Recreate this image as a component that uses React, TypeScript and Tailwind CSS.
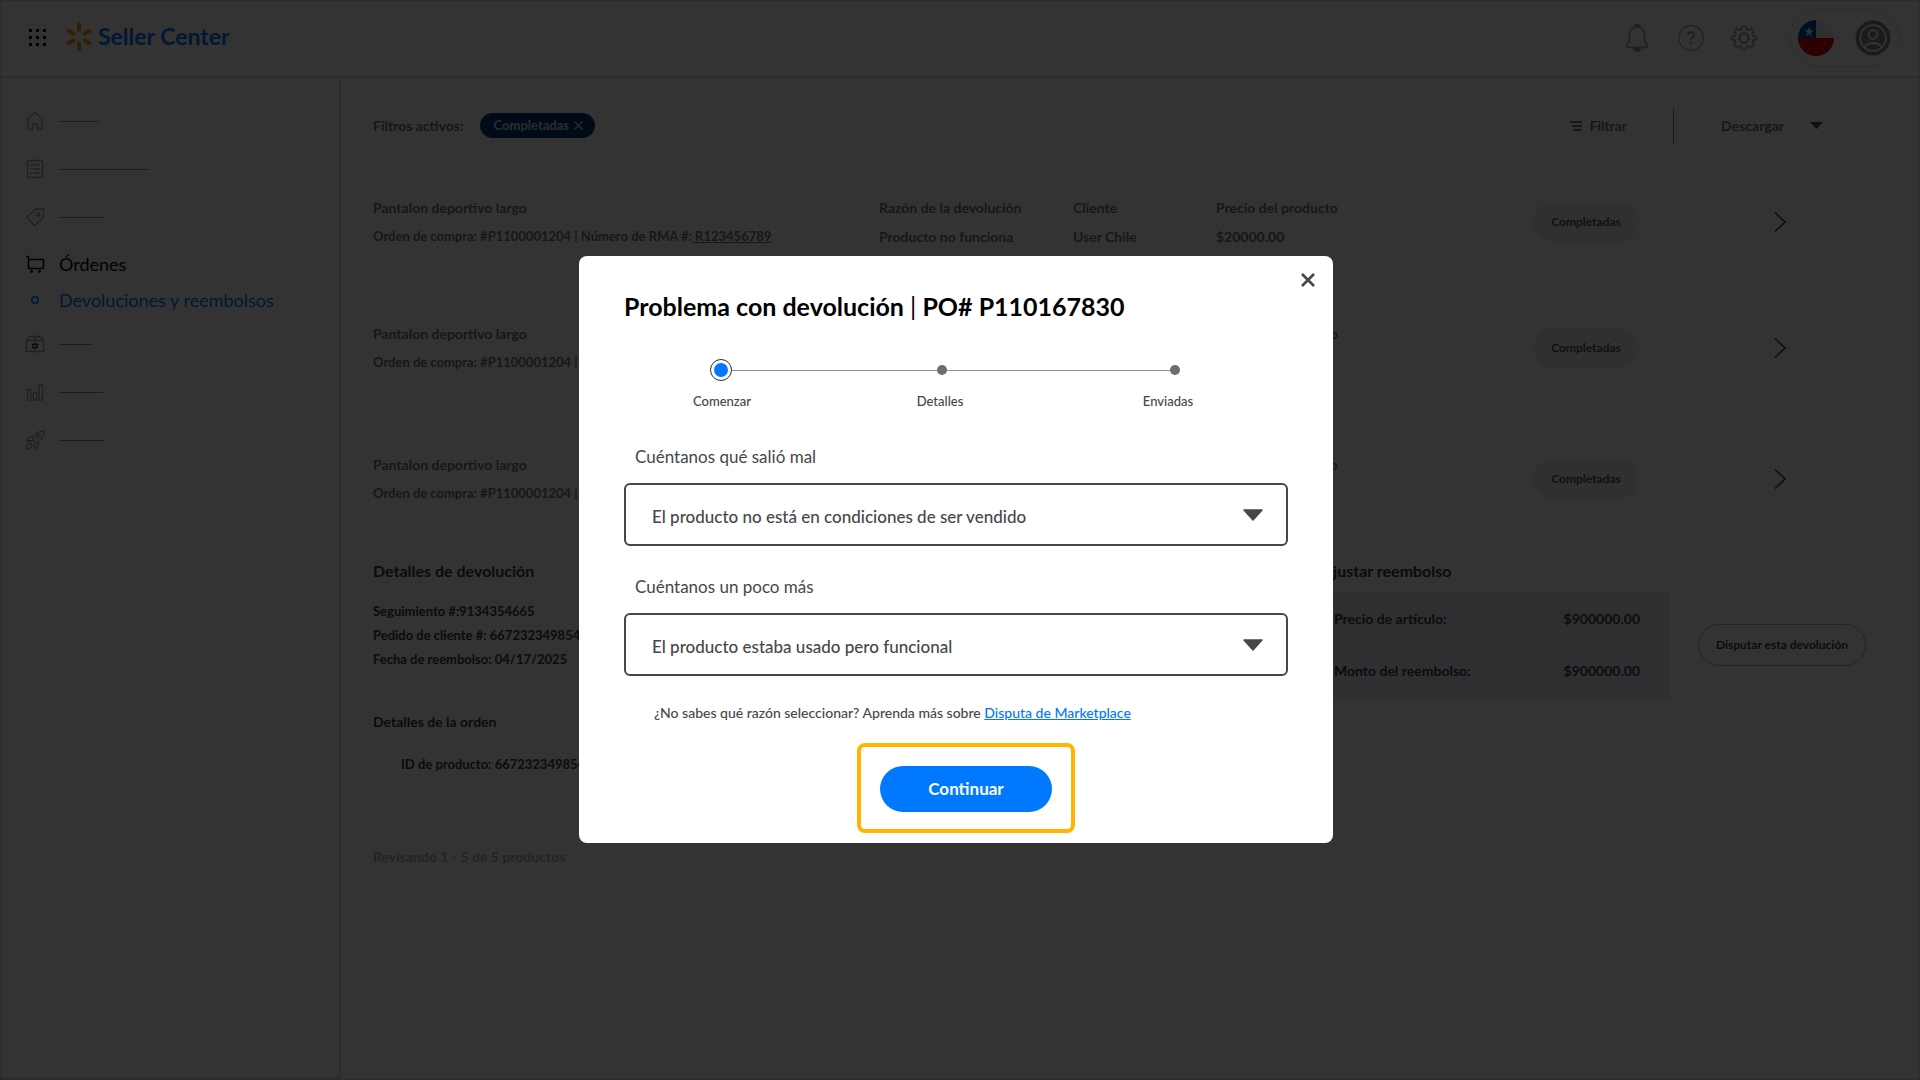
import { Fragment, type ReactNode } from "react";

const orders = [
    { id: 1, open: false, spacing: "pt-[25px] pb-[31px]" },
    { id: 2, open: false, spacing: "py-9" },
    { id: 3, open: true, spacing: "py-9" },
];

const steps = ["Comenzar", "Detalles", "Enviadas"];

const Icon = ({
    children,
    className = "size-5",
}: {
    children: ReactNode;
    className?: string;
}) => (
    <svg
        viewBox="0 0 20 20"
        fill="none"
        stroke="currentColor"
        strokeWidth="1.3"
        strokeLinejoin="round"
        aria-hidden="true"
        className={className}
    >
        {children}
    </svg>
);

const Spark = () => (
    <svg
        viewBox="0 0 26 30"
        stroke="#ffa200"
        strokeWidth="4"
        strokeLinecap="round"
        aria-hidden="true"
        className="h-[30px] w-[26px]"
    >
        <path d="M13 2.6v6M13 21.4v6M2.6 9l4.8 2.6M18.6 11.6l4.8-2.6M2.6 21l4.8-2.6M18.6 18.4l4.8 2.6" />
    </svg>
);

const Header = () => (
    <header className="flex h-[77px] items-center justify-between border-b-2 border-[#dcdcdc] pr-[19px] pb-[2px] pl-7">
        <div className="flex items-center pb-px">
            <button type="button" aria-label="Aplicaciones">
                <svg viewBox="0 0 17 17" className="size-[17px]">
                    <path d="M0 0h3v3H0zM7 0h3v3H7zM14 0h3v3h-3zM0 7h3v3H0zM7 7h3v3H7zM14 7h3v3h-3zM0 14h3v3H0zM7 14h3v3H7zM14 14h3v3h-3z" />
                </svg>
            </button>
            <a href="#" className="ml-5 flex items-center gap-[6px]">
                <Spark />
                <span className="pb-[2px] text-[23px] leading-7 font-bold text-[#0079ff]">
                    Seller Center
                </span>
            </a>
        </div>
        <div className="flex items-center text-[#a0a0a0]">
            <button type="button" aria-label="Notificaciones">
                <svg
                    viewBox="0 0 24 28"
                    fill="none"
                    stroke="currentColor"
                    strokeWidth="1.8"
                    strokeLinejoin="round"
                    className="h-7 w-6"
                >
                    <path d="M12 3.2c-5 0-7.6 3.6-7.6 8v5.4c0 2.2-2.9 3.4-2.9 5.2 0 .9.5 1.5 1.4 1.5h18.2c.9 0 1.4-.6 1.4-1.5 0-1.8-2.9-3-2.9-5.2v-5.4c0-4.4-2.6-8-7.6-8z" />
                    <path
                        d="M9.5 3.2a2.5 2.5 0 0 1 5 0zM9 24h6a3 3 0 0 1-6 0z"
                        fill="currentColor"
                    />
                </svg>
            </button>
            <button type="button" aria-label="Ayuda" className="ml-[29px]">
                <svg
                    viewBox="0 0 26 26"
                    fill="none"
                    stroke="currentColor"
                    className="size-[26px]"
                >
                    <circle cx="13" cy="13" r="12.3" strokeWidth="1.2" />
                    <path
                        d="M10.2 10a2.9 2.9 0 1 1 4.3 2.5c-1 .6-1.5 1.2-1.5 2.7"
                        strokeWidth="2"
                    />
                    <circle cx="13" cy="18" r="1.3" fill="currentColor" stroke="none" />
                </svg>
            </button>
            <button type="button" aria-label="Configuración" className="ml-[27px]">
                <svg
                    viewBox="0 0 26 26"
                    fill="none"
                    stroke="currentColor"
                    strokeWidth="1.6"
                    strokeLinejoin="round"
                    className="size-[26px]"
                >
                    <path d="M10.9 1.3h4.2l.5 3 2.1.9 2.5-1.8 2.9 2.9-1.8 2.5.9 2.1 3 .5v3.200l-3 .5-.9 2.1 1.8 2.5-2.9 2.9-2.5-1.8-2.1.9-.5 3h-4.2l-.5-3-2.1-.9-2.5 1.8-2.9-2.9 1.8-2.5-.9-2.1-3-.5v-3.200l3-.5.9-2.1-1.8-2.5 2.9-2.9 2.500 1.8 2.1-.9z" />
                    <circle cx="13" cy="13" r="4.6" strokeWidth="2.2" />
                </svg>
            </button>
            <div className="ml-8 flex h-[58px] items-center gap-[10px] rounded-full border border-[#e0e0e0] px-2">
                <svg viewBox="0 0 36 36" role="img" aria-label="Chile" className="size-9">
                    <clipPath id="flag">
                        <circle cx="18" cy="18" r="18" />
                    </clipPath>
                    <g clipPath="url(#flag)">
                        <path d="M0 0h36v18H0z" fill="#f0f0f0" />
                        <path d="M0 0h18v18H0z" fill="#0052b4" />
                        <path d="M0 18h36v18H0z" fill="#e60000" />
                        <path
                            d="m11 6.5 1.2 3.7h3.9l-3.2 2.3 1.2 3.7-3.1-2.3-3.1 2.3 1.2-3.7-3.2-2.3h3.9z"
                            fill="#f0f0f0"
                        />
                    </g>
                </svg>
                <span className="h-9 w-px bg-[#f4f4f4]" />
                <button type="button" aria-label="Cuenta">
                    <svg viewBox="0 0 36 36" className="size-9">
                        <circle cx="18" cy="18" r="17.5" fill="#868686" />
                        <g fill="none" stroke="#fff" strokeWidth="1.8">
                            <circle cx="18" cy="18" r="12.8" />
                            <circle cx="18" cy="14.5" r="4.3" />
                            <path d="M9.5 27c2-3 5-4 8.5-4s6.5 1 8.5 4" />
                        </g>
                    </svg>
                </button>
            </div>
        </div>
    </header>
);

const MenuItem = ({ icon, line }: { icon: ReactNode; line: string }) => (
    <li className="flex h-12 items-center gap-[14px]">
        {icon}
        <span className={`h-px bg-[#909090] ${line}`} />
    </li>
);

const Sidebar = () => (
    <nav className="w-[340px] shrink-0 border-r-2 border-b-2 border-[#dcdcdc] pt-[19px] pl-6 text-[#a0a0a0]">
        <ul>
            <MenuItem
                line="w-10"
                icon={
                    <Icon>
                        <path d="m1.5 9 8.5-7.5L18.5 9M3 8v10.500h4.500V15a2.500 2.500 0 0 1 5 0v3.500H17V8" />
                    </Icon>
                }
            />
            <MenuItem
                line="w-[90px]"
                icon={
                    <Icon>
                        <rect x="2.5" y="1.5" width="15" height="17" rx="1" />
                        <path d="M5 6h1.5M8 6h7M5 10h1.5M8 10h7M5 14h1.5M8 14h7" />
                    </Icon>
                }
            />
            <MenuItem
                line="w-[45px]"
                icon={
                    <Icon>
                        <path d="M10.5 2h8v8l-9 8.5-7.800-8z" />
                        <rect x="12" y="6" width="2.5" height="3" />
                    </Icon>
                }
            />
            <li>
                <a
                    href="#"
                    className="flex h-[46px] items-center gap-[14px] text-lg leading-6 text-black"
                >
                    <Icon>
                        <path
                            d="M1 2.5h2.5v12H17a1.500 1.500 0 0 0 1.500-1.500V5.500h-15"
                            strokeWidth="1.5"
                        />
                        <circle cx="6.5" cy="17.5" r="1.4" fill="currentColor" stroke="none" />
                        <circle cx="14.5" cy="17.5" r="1.4" fill="currentColor" stroke="none" />
                    </Icon>
                    Órdenes
                </a>
            </li>
            <li>
                <a
                    href="#"
                    aria-current="page"
                    className="flex h-[26px] items-center gap-[14px] text-lg leading-6 text-[#0079ff]"
                >
                    <Icon>
                        <circle cx="10" cy="10" r="3.2" strokeWidth="1.6" />
                    </Icon>
                    Devoluciones y reembolsos
                </a>
            </li>
        </ul>
        <ul className="mt-[7px]">
            <MenuItem
                line="w-[33px]"
                icon={
                    <Icon>
                        <path d="M1.5 6.5 4 2.5h12l2.5 4v11h-17zM1.5 6.5h17M10 2.5v4" />
                        <path
                            d="M10 8.5v2.4M10 13.1v2.4M7 10.2l2 1.2M11 12.6l2 1.2M13 10.2l-2 1.2M9 12.6l-2 1.2"
                            stroke="#000"
                            strokeWidth="1.4"
                        />
                    </Icon>
                }
            />
            <MenuItem
                line="w-11"
                icon={
                    <Icon>
                        <path d="M2.5 7.5H6V18H2.5zM8.300 10.500h3.400V18H8.300zM14 3h3.500v15H14z" />
                    </Icon>
                }
            />
            <MenuItem
                line="w-[45px]"
                icon={
                    <Icon>
                        <path d="M19 1c-5 0-9 2-11.5 8.500l3.500 3.500C17 10.500 19.500 6.500 19 1zM8 6.500c-3-.5-5 1-6.500 4.500l5.500-.5M13.500 12c.5 3-1 5-3.500 7l-1-5.500M5.500 13c-3 .5-4 3-4.500 6.500 3-.5 6-1 6-4.500z" />
                        <circle cx="13.5" cy="6.5" r="1.7" />
                    </Icon>
                }
            />
        </ul>
    </nav>
);

const Filters = () => (
    <div className="flex h-[90px] items-center justify-between border-b border-[#eaeaea] pt-[6px] pl-8">
        <div className="flex items-center gap-4">
            <span>Filtros activos:</span>
            <button
                type="button"
                className="flex h-[25px] items-center gap-[5px] rounded-full bg-[#003a75] pr-3 pl-[14px] text-[13px] text-white/80"
            >
                Completadas
                <svg viewBox="0 0 9 9" stroke="currentColor" strokeWidth="1.2" className="size-[9px]">
                    <path d="m.5.5 8 8M8.5.5l-8 8" />
                </svg>
            </button>
        </div>
        <div className="flex items-center pr-[62px]">
            <button type="button" className="flex items-center gap-[7px]">
                <svg viewBox="0 0 12 10" className="h-[10px] w-3" fill="currentColor">
                    <path d="M0 0h12v2H0zM2 4h10v2H2zM3 8h9v2H3z" />
                </svg>
                Filtrar
            </button>
            <span className="ml-[46px] h-9 w-px bg-[#7c7c7c]" />
            <button type="button" className="ml-[47px] flex items-center gap-[26px]">
                Descargar
                <svg viewBox="0 0 13 7" className="h-[7px] w-[13px]">
                    <path d="M0 0h13L6.5 7z" fill="#505050" />
                </svg>
            </button>
        </div>
    </div>
);

const OrderRow = ({ spacing }: { spacing: string }) => (
    <div
        className={`grid grid-cols-[506fr_194fr_143fr_317fr_241fr_111fr] items-center pl-8 leading-[29px] ${spacing}`}
    >
        <div>
            <p>Pantalon deportivo largo</p>
            <p className="text-[13px] leading-[29px] whitespace-nowrap">
                Orden de compra: #P1100001204 | Número de RMA #:
                <a href="#" className="underline">
                    {" "}
                    R123456789
                </a>
            </p>
        </div>
        <div>
            <p>Razón de la devolución</p>
            <p>Producto no funciona</p>
        </div>
        <div>
            <p>Cliente</p>
            <p>User Chile</p>
        </div>
        <div>
            <p>Precio del producto</p>
            <p>$20000.00</p>
        </div>
        <div>
            <span className="inline-flex h-10 w-[106px] items-center justify-center rounded-full bg-[#eeeeea] text-xs text-[#555]">
                Completadas
            </span>
        </div>
        <button type="button" aria-label="Ver orden">
            <svg
                viewBox="0 0 12 20"
                fill="none"
                stroke="#484848"
                strokeWidth="1.6"
                className="h-5 w-3"
            >
                <path d="m1 .5 10 9.5-10 9.5" />
            </svg>
        </button>
    </div>
);

const OrderDetails = () => (
    <div className="grid grid-cols-[949fr_347fr_216fr] pt-[15px] pb-11 pl-8 text-[#3c3c3c]">
        <div>
            <h2 className="text-base leading-6">Detalles de devolución</h2>
            <div className="mt-4 text-[13px] leading-6">
                <p>Seguimiento #:9134354665</p>
                <p>Pedido de cliente #: 6672323498542</p>
                <p>Fecha de reembolso: 04/17/2025</p>
            </div>
            <h2 className="mt-[39px] leading-6">Detalles de la orden</h2>
            <p className="mt-[18px] pl-7 text-[13px] leading-6">
                ID de producto: 6672323498542
            </p>
        </div>
        <div>
            <h2 className="text-base leading-6">Ajustar reembolso</h2>
            <dl className="mt-[9px] bg-[#e4ebf2] pr-[11px] pb-1 pl-3">
                <div className="flex justify-between border-b border-[#cfd4d9] pr-[18px] leading-[53px]">
                    <dt>Precio de artículo:</dt>
                    <dd>$900000.00</dd>
                </div>
                <div className="flex justify-between pr-[18px] leading-[49px]">
                    <dt>Monto del reembolso:</dt>
                    <dd>$900000.00</dd>
                </div>
            </dl>
        </div>
        <div className="pt-[65px] pl-[29px]">
            <button
                type="button"
                className="h-[42px] w-[168px] rounded-full border border-[#b0b0b0] text-xs"
            >
                Disputar esta devolución
            </button>
        </div>
    </div>
);

const Stepper = () => (
    <Fragment>
        <div className="mt-9 flex h-6 items-center pr-[108px] pl-[86px]">
            <span className="flex size-[22px] items-center justify-center rounded-full border border-[#2e2f32]">
                <span className="size-[14px] rounded-full bg-[#0079ff]" />
            </span>
            <span className="h-px grow-[205] bg-[#8f8f8f]" />
            <span className="size-[10px] rounded-full bg-[#6d6e71]" />
            <span className="h-px grow-[223] bg-[#8f8f8f]" />
            <span className="size-[10px] rounded-full bg-[#6d6e71]" />
        </div>
        <ol className="mt-[7px] grid grid-cols-[196fr_240fr_216fr] pr-3 text-center text-[13px] leading-6 font-medium">
            {steps.map((step) => (
                <li key={step}>{step}</li>
            ))}
        </ol>
    </Fragment>
);

const SelectField = ({
    id,
    label,
    value,
}: {
    id: string;
    label: string;
    value: string;
}) => (
    <div>
        <label htmlFor={id} className="block pl-[11px] text-[17px] leading-6">
            {label}
        </label>
        <div className="relative mt-[14px]">
            <select
                id={id}
                className="h-[63px] w-full appearance-none rounded-md border-2 border-[#46474a] pt-[6px] pl-[26px] text-[17px] font-medium"
            >
                <option>{value}</option>
            </select>
            <svg
                viewBox="0 0 20 12"
                className="pointer-events-none absolute top-[26px] right-[25px] h-3 w-5"
            >
                <path
                    d="M1 1h18l-9 10z"
                    fill="#46474a"
                    stroke="#46474a"
                    strokeWidth="1.5"
                    strokeLinejoin="round"
                />
            </svg>
        </div>
    </div>
);

const DisputeDialog = () => (
    <div className="fixed inset-0 flex items-start justify-center bg-black/80 pt-64 pr-2">
        <section
            role="dialog"
            aria-modal="true"
            aria-labelledby="dispute-title"
            className="relative w-[754px] rounded-lg bg-white px-[45px] pt-[34px] pb-[10px] font-normal text-[#46474a]"
        >
            <button
                type="button"
                aria-label="Cerrar"
                className="absolute top-[17px] right-[18px]"
            >
                <svg
                    viewBox="0 0 14 14"
                    stroke="currentColor"
                    strokeWidth="2.6"
                    className="size-[14px]"
                >
                    <path d="m1 1 12 12M13 1 1 13" />
                </svg>
            </button>
            <h1 id="dispute-title" className="text-[25px] leading-8 font-bold text-black">
                Problema con devolución <span className="font-normal">|</span> PO# P110167830
            </h1>
            <Stepper />
            <form className="mt-8 flex flex-col">
                <SelectField
                    id="reason"
                    label="Cuéntanos qué salió mal"
                    value="El producto no está en condiciones de ser vendido"
                />
                <div className="mt-[29px]">
                    <SelectField
                        id="detail"
                        label="Cuéntanos un poco más"
                        value="El producto estaba usado pero funcional"
                    />
                </div>
                <p className="mt-[25px] pl-[30px] text-sm leading-6 font-medium">
                    ¿No sabes qué razón seleccionar? Aprenda más sobre{" "}
                    <a href="#" className="text-[#0079ff] underline">
                        Disputa de Marketplace
                    </a>
                </p>
                <div className="mt-[18px] ml-5 self-center rounded-lg border-4 border-[#ffb400] px-[19px] pt-[19px] pb-[17px]">
                    <button
                        type="button"
                        className="block h-[46px] w-[172px] rounded-full bg-[#0079ff] pt-px text-[17px] font-bold text-white"
                    >
                        Continuar
                    </button>
                </div>
            </form>
        </section>
    </div>
);

export default function App() {
    return (
        <div className="flex min-h-screen flex-col border border-[#dcdcdc] bg-white font-[Lato,sans-serif] text-sm text-[#757575]">
            <Header />
            <div className="flex grow">
                <Sidebar />
                <main className="grow pr-[34px] font-bold">
                    <Filters />
                    {orders.map((order) => (
                        <div key={order.id} className="border-b border-[#eaeaea]">
                            <OrderRow spacing={order.spacing} />
                            {order.open && <OrderDetails />}
                        </div>
                    ))}
                    <p className="mt-6 pl-8 leading-6 text-[#b0b0b0]">
                        Revisando 1 - 5 de 5 productos
                    </p>
                </main>
            </div>
            <DisputeDialog />
        </div>
    );
}
